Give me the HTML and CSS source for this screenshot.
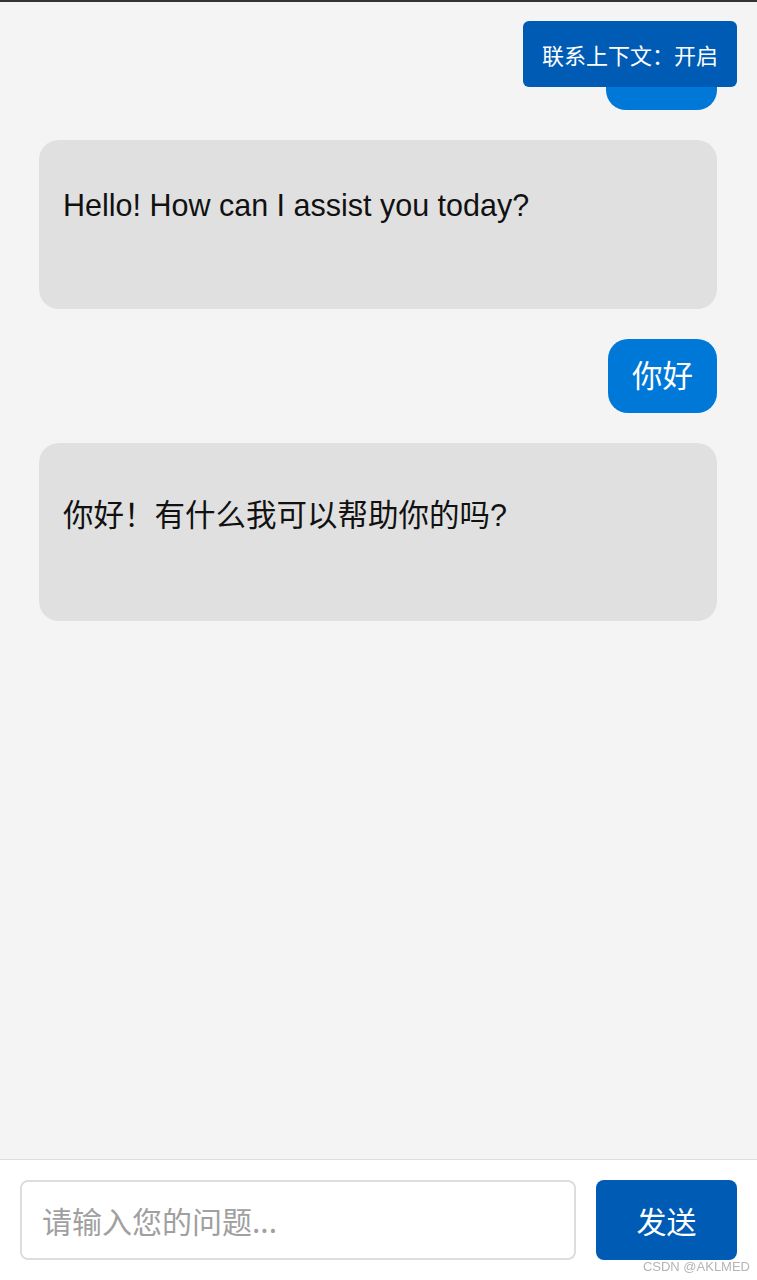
FILE: index.html
```html
<!DOCTYPE html>
<html lang="zh-CN">
<head>
    <meta charset="UTF-8">
    <meta name="viewport" content="width=device-width, initial-scale=1.0">
    <link rel="stylesheet" href="styles.css">
</head>
<body>
<div class="chat">
    <div class="messages">
        <!-- earlier message, scrolled up behind the toggle -->
        <div class="bubble user scrolled"></div>
        <div class="bubble bot">Hello! How can I assist you today?</div>
        <div class="bubble user">你好</div>
        <div class="bubble bot">你好！有什么我可以帮助你的吗?</div>
    </div>
</div>

<button id="context-toggle">联系上下文：开启</button>

<div class="input-bar">
    <input type="text" id="question" placeholder="请输入您的问题...">
    <button id="send-button">发送</button>
</div>

<span class="watermark">CSDN @AKLMED</span>
</body>
</html>
```

FILE: styles.css
```css
body {
    margin: 0;
    padding: 0;
    font-family: "Liberation Sans", Arial, "Noto Sans CJK SC", sans-serif;
    background-color: #f4f4f4;
    height: 100vh;
    display: flex;
    flex-direction: column;
    overflow: hidden;
}

.chat {
    flex: 1;
    overflow: hidden;
    border-top: 2px solid #333;
}

.messages {
    display: flex;
    flex-direction: column;
    gap: 30px;
    padding: 34px 40px 20px 39px;
}

.bubble {
    font-size: 30.5px;
    border-radius: 20px;
    word-wrap: break-word;
}

.bubble.user {
    align-self: flex-end;
    background-color: #0078d7;
    color: #fff;
    line-height: 40px;
    padding: 17px 24px;
}

.bubble.scrolled {
    width: 63px;
    height: 40px;
}

.bubble.bot {
    align-self: stretch;
    background-color: #e0e0e0;
    color: #111;
    padding: 48px 24px 86px 24px;
}

#context-toggle {
    position: fixed;
    top: 21px;
    right: 20px;
    background-color: #005bb5;
    color: #fff;
    border: none;
    border-radius: 6px;
    padding: 17px 19px;
    font-family: "Noto Sans CJK SC", sans-serif;
    font-size: 22px;
    cursor: pointer;
}

.input-bar {
    display: flex;
    gap: 20px;
    padding: 20px;
    background-color: #fff;
    border-top: 1px solid #ddd;
}

#question {
    flex: 1;
    height: 80px;
    box-sizing: border-box;
    padding: 0 20px;
    border: 2px solid #ddd;
    border-radius: 8px;
    font-family: "Noto Sans CJK SC", sans-serif;
    font-size: 30px;
    outline: none;
}

#question::placeholder {
    color: #a0a0a0;
}

#send-button {
    width: 141px;
    height: 80px;
    border: none;
    border-radius: 8px;
    background-color: #005bb5;
    color: #fff;
    font-family: "Noto Sans CJK SC", sans-serif;
    font-size: 30px;
    cursor: pointer;
}

.watermark {
    position: fixed;
    right: 7px;
    bottom: 6px;
    font-size: 13px;
    color: #b5b5b5;
}
```
